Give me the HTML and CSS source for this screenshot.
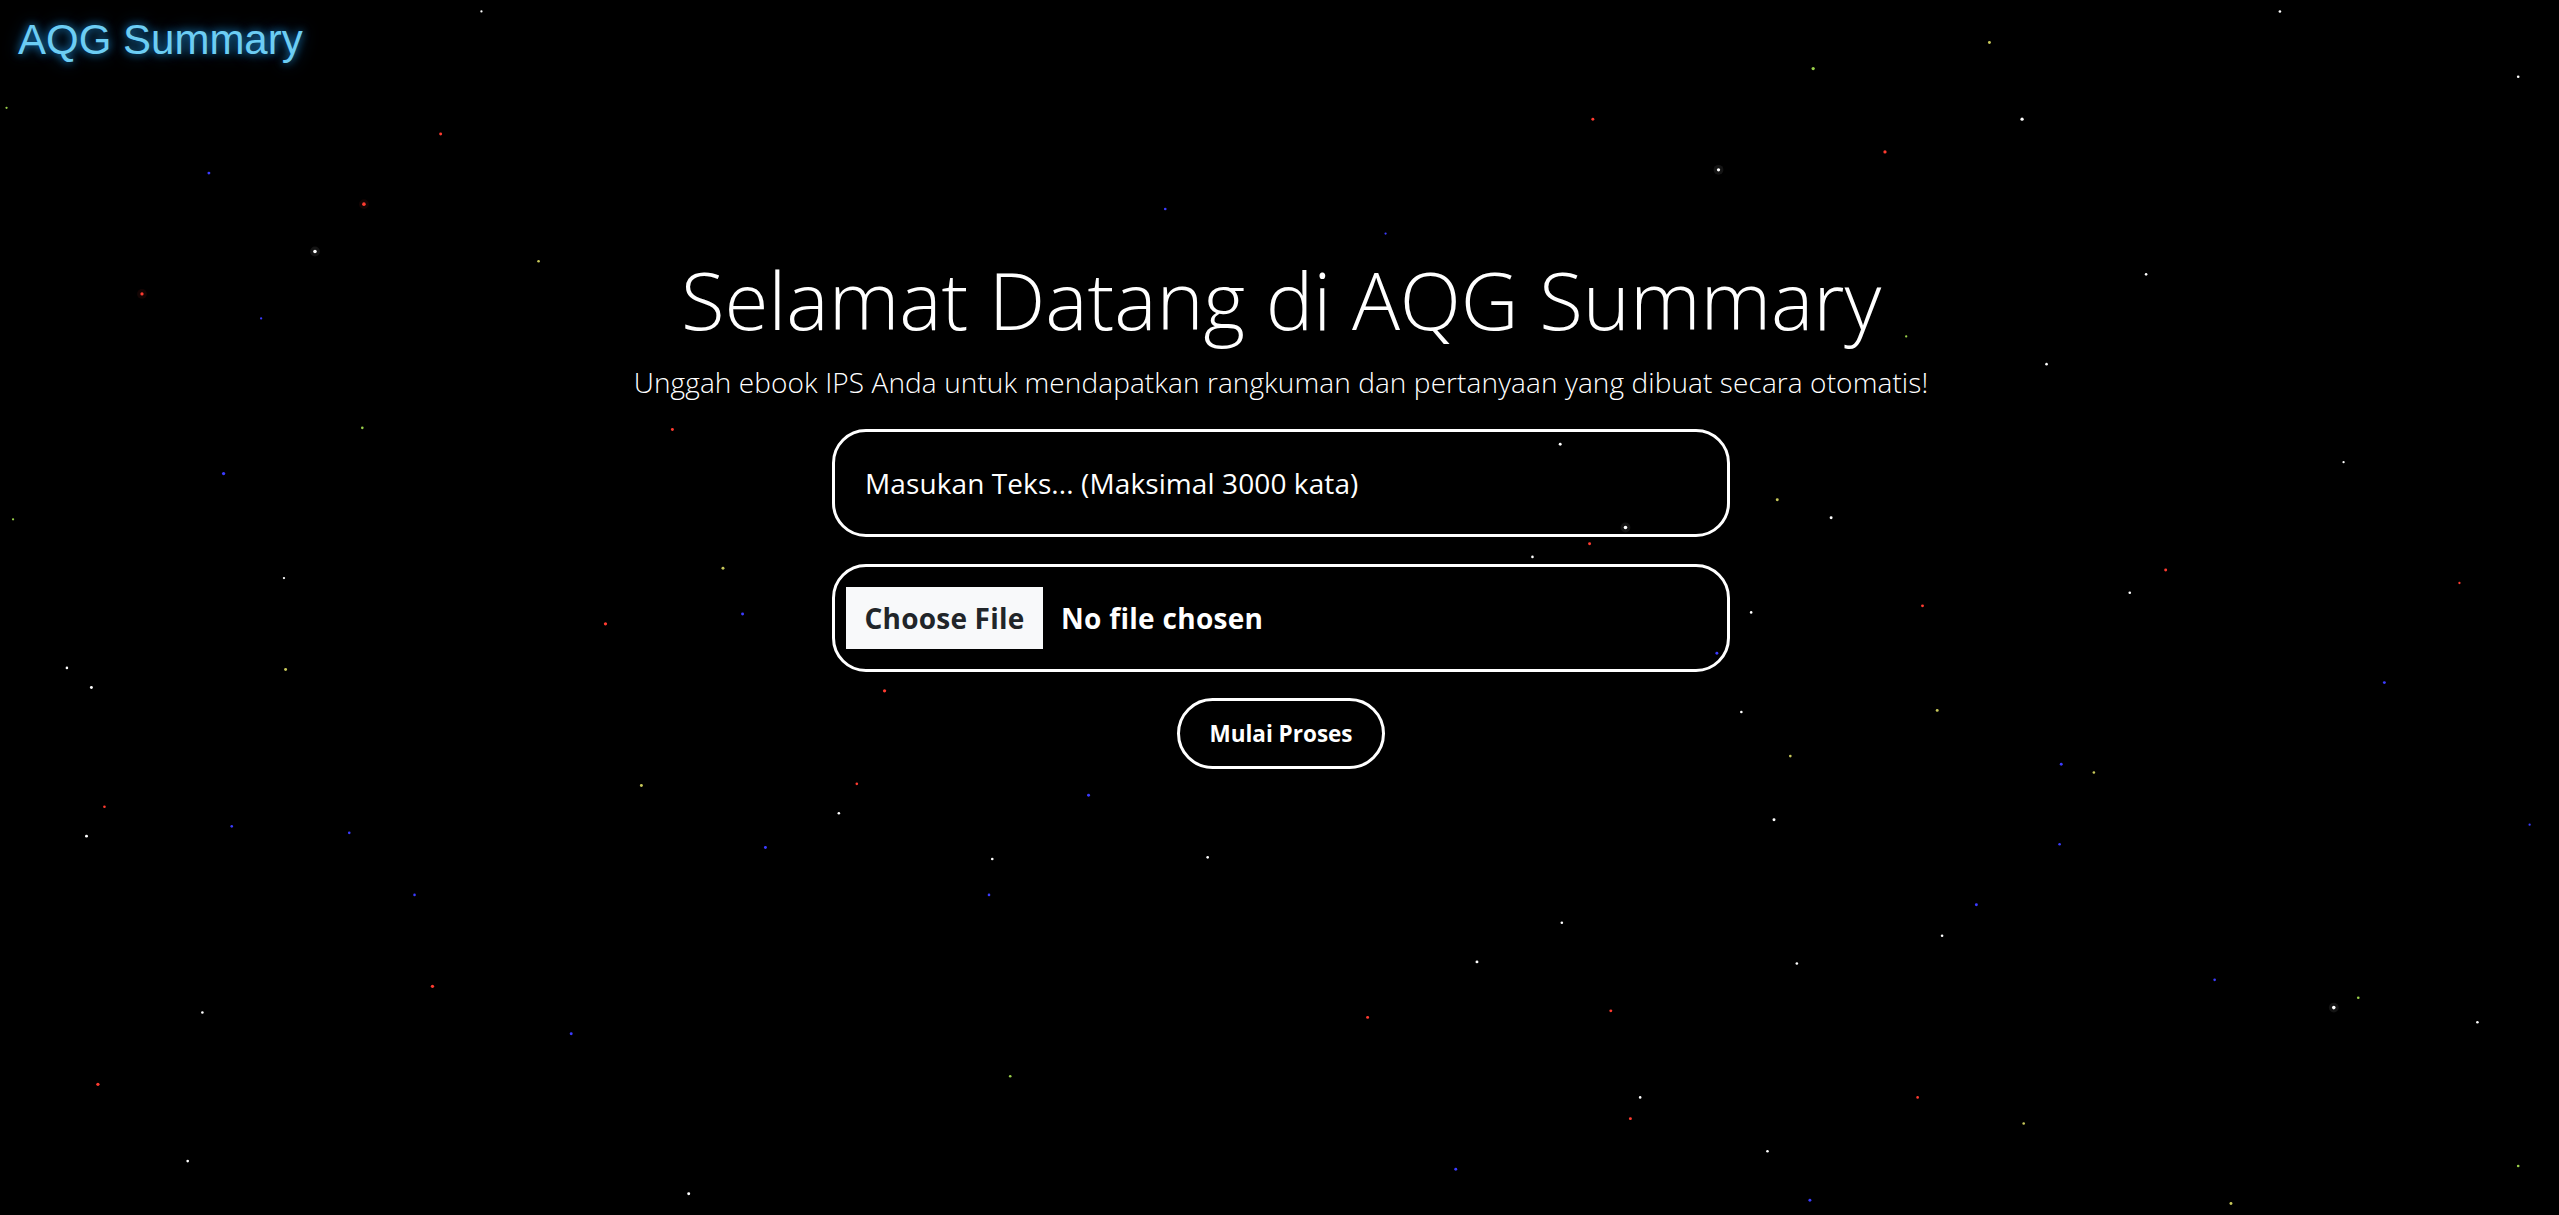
FILE: index.html
```html
<!DOCTYPE html>
<html lang="id">
<head>
<meta charset="utf-8">
<title>AQG Summary</title>
<link rel="stylesheet" href="styles.css">
</head>
<body>
<svg class="starfield" viewBox="0 0 1568 744" preserveAspectRatio="none" aria-hidden="true">
  <g class="halo">
    <circle cx="223" cy="125" r="3" fill="#ff3b30"/>
    <circle cx="193" cy="154" r="3" fill="#ffffff"/>
    <circle cx="87" cy="180" r="3" fill="#ff3b30"/>
    <circle cx="996" cy="323" r="3" fill="#ffffff"/>
    <circle cx="1053" cy="104" r="3" fill="#ffffff"/>
    <circle cx="1430" cy="617" r="3" fill="#ffffff"/>
  </g>
  <circle cx="223" cy="125" r="1.1" fill="#ff3b30"/>
  <circle cx="193" cy="154" r="1.1" fill="#ffffff"/>
  <circle cx="87" cy="180" r="1" fill="#ff3b30"/>
  <circle cx="128" cy="106" r="0.9" fill="#3b3bff"/>
  <circle cx="270" cy="82" r="0.9" fill="#ff3b30"/>
  <circle cx="330" cy="160" r="0.8" fill="#c8c85a"/>
  <circle cx="137" cy="290" r="1" fill="#3b3bff"/>
  <circle cx="371" cy="382" r="1" fill="#ff3b30"/>
  <circle cx="56" cy="421" r="0.9" fill="#ffffff"/>
  <circle cx="41" cy="409" r="0.8" fill="#ffffff"/>
  <circle cx="175" cy="410" r="0.9" fill="#c8c85a"/>
  <circle cx="443" cy="348" r="0.9" fill="#c8c85a"/>
  <circle cx="455" cy="376" r="0.9" fill="#3b3bff"/>
  <circle cx="412" cy="263" r="0.9" fill="#ff3b30"/>
  <circle cx="542" cy="423" r="1" fill="#ff3b30"/>
  <circle cx="1053" cy="104" r="1" fill="#ffffff"/>
  <circle cx="1111" cy="42" r="1" fill="#9ad04a"/>
  <circle cx="1155" cy="93" r="1" fill="#ff3b30"/>
  <circle cx="1239" cy="73" r="1" fill="#ffffff"/>
  <circle cx="1219" cy="26" r="0.9" fill="#c8c85a"/>
  <circle cx="1397" cy="7" r="0.8" fill="#ffffff"/>
  <circle cx="1543" cy="47" r="0.8" fill="#ffffff"/>
  <circle cx="976" cy="73" r="0.9" fill="#ff3b30"/>
  <circle cx="1254" cy="223" r="0.8" fill="#ffffff"/>
  <circle cx="1315" cy="168" r="0.8" fill="#ffffff"/>
  <circle cx="1089" cy="306" r="0.9" fill="#c8c85a"/>
  <circle cx="1122" cy="317" r="0.9" fill="#ffffff"/>
  <circle cx="1327" cy="349" r="0.9" fill="#ff3b30"/>
  <circle cx="1305" cy="363" r="0.8" fill="#ffffff"/>
  <circle cx="1178" cy="371" r="0.9" fill="#ff3b30"/>
  <circle cx="1073" cy="375" r="0.8" fill="#ffffff"/>
  <circle cx="996" cy="323" r="1.1" fill="#ffffff"/>
  <circle cx="956" cy="272" r="0.9" fill="#ffffff"/>
  <circle cx="974" cy="333" r="0.9" fill="#ff3b30"/>
  <circle cx="939" cy="341" r="0.8" fill="#ffffff"/>
  <circle cx="1052" cy="400" r="0.9" fill="#3b3bff"/>
  <circle cx="1187" cy="435" r="0.9" fill="#c8c85a"/>
  <circle cx="1263" cy="468" r="0.9" fill="#3b3bff"/>
  <circle cx="1283" cy="473" r="0.8" fill="#c8c85a"/>
  <circle cx="1461" cy="418" r="0.9" fill="#3b3bff"/>
  <circle cx="1097" cy="463" r="0.8" fill="#c8c85a"/>
  <circle cx="1067" cy="436" r="0.8" fill="#ffffff"/>
  <circle cx="1087" cy="502" r="0.9" fill="#ffffff"/>
  <circle cx="1211" cy="554" r="0.9" fill="#3b3bff"/>
  <circle cx="1357" cy="600" r="0.8" fill="#3b3bff"/>
  <circle cx="1430" cy="617" r="1.1" fill="#ffffff"/>
  <circle cx="1445" cy="611" r="0.8" fill="#9ad04a"/>
  <circle cx="1101" cy="590" r="0.8" fill="#ffffff"/>
  <circle cx="905" cy="589" r="0.9" fill="#ffffff"/>
  <circle cx="957" cy="565" r="0.8" fill="#ffffff"/>
  <circle cx="987" cy="619" r="0.9" fill="#ff3b30"/>
  <circle cx="1175" cy="672" r="0.8" fill="#ff3b30"/>
  <circle cx="1005" cy="672" r="0.8" fill="#ffffff"/>
  <circle cx="999" cy="685" r="0.9" fill="#ff3b30"/>
  <circle cx="1083" cy="705" r="0.8" fill="#ffffff"/>
  <circle cx="1109" cy="735" r="0.9" fill="#3b3bff"/>
  <circle cx="1367" cy="737" r="0.9" fill="#c8c85a"/>
  <circle cx="1240" cy="688" r="0.8" fill="#c8c85a"/>
  <circle cx="892" cy="716" r="0.9" fill="#3b3bff"/>
  <circle cx="838" cy="623" r="0.9" fill="#ff3b30"/>
  <circle cx="422" cy="731" r="0.9" fill="#ffffff"/>
  <circle cx="350" cy="633" r="0.9" fill="#3b3bff"/>
  <circle cx="265" cy="604" r="1" fill="#ff3b30"/>
  <circle cx="124" cy="620" r="0.8" fill="#ffffff"/>
  <circle cx="60" cy="664" r="1" fill="#ff3b30"/>
  <circle cx="115" cy="711" r="0.8" fill="#ffffff"/>
  <circle cx="53" cy="512" r="0.9" fill="#ffffff"/>
  <circle cx="64" cy="494" r="0.8" fill="#ff3b30"/>
  <circle cx="393" cy="481" r="0.9" fill="#c8c85a"/>
  <circle cx="469" cy="519" r="0.9" fill="#3b3bff"/>
  <circle cx="606" cy="548" r="0.8" fill="#3b3bff"/>
  <circle cx="619" cy="659" r="0.8" fill="#9ad04a"/>
  <circle cx="740" cy="525" r="0.8" fill="#ffffff"/>
  <circle cx="667" cy="487" r="0.9" fill="#3b3bff"/>
  <circle cx="608" cy="526" r="0.8" fill="#ffffff"/>
  <circle cx="514" cy="498" r="0.8" fill="#ffffff"/>
  <circle cx="525" cy="480" r="0.8" fill="#ff3b30"/>
  <circle cx="254" cy="548" r="0.8" fill="#3b3bff"/>
  <circle cx="142" cy="506" r="0.8" fill="#3b3bff"/>
  <circle cx="214" cy="510" r="0.8" fill="#3b3bff"/>
  <circle cx="1543" cy="714" r="0.8" fill="#9ad04a"/>
  <circle cx="1518" cy="626" r="0.8" fill="#ffffff"/>
  <circle cx="1190" cy="573" r="0.8" fill="#ffffff"/>
  <circle cx="1262" cy="517" r="0.8" fill="#3b3bff"/>
  <circle cx="222" cy="262" r="0.8" fill="#9ad04a"/>
  <circle cx="174" cy="354" r="0.7" fill="#ffffff"/>
  <circle cx="8" cy="318" r="0.7" fill="#9ad04a"/>
  <circle cx="714" cy="128" r="0.8" fill="#3b3bff"/>
  <circle cx="849" cy="143" r="0.7" fill="#3b3bff"/>
  <circle cx="1168" cy="206" r="0.7" fill="#9ad04a"/>
  <circle cx="1436" cy="283" r="0.7" fill="#ffffff"/>
  <circle cx="1507" cy="357" r="0.7" fill="#ff3b30"/>
  <circle cx="1550" cy="505" r="0.7" fill="#3b3bff"/>
  <circle cx="295" cy="7" r="0.7" fill="#ffffff"/>
  <circle cx="160" cy="195" r="0.7" fill="#3b3bff"/>
  <circle cx="4" cy="66" r="0.7" fill="#9ad04a"/>
</svg>

<header class="site-header">
  <span class="logo">AQG Summary</span>
</header>

<main class="hero">
  <h1 class="hero-title">Selamat Datang di AQG Summary</h1>
  <p class="hero-subtitle">Unggah ebook IPS Anda untuk mendapatkan rangkuman dan pertanyaan yang dibuat secara otomatis!</p>

  <form class="upload-form">
    <div class="field text-field"><span class="field-placeholder">Masukan Teks... (Maksimal 3000 kata)</span></div>
    <label class="field file-field">
      <input type="file" class="file-native">
      <span class="file-button">Choose File</span>
      <span class="file-name">No file chosen</span>
    </label>
    <button type="button" class="submit-button">Mulai Proses</button>
  </form>
</main>
</body>
</html>
```

FILE: styles.css
```css
* {
  box-sizing: border-box;
}

html, body {
  margin: 0;
  padding: 0;
  background: #000;
}

body {
  min-height: 100vh;
  position: relative;
  overflow: hidden;
  color: #fff;
  font-family: "Open Sans", "Noto Sans", sans-serif;
}

.starfield {
  position: absolute;
  inset: 0;
  width: 100%;
  height: 100%;
  z-index: 0;
}

.starfield .halo circle {
  opacity: 0.08;
}

.site-header,
.hero {
  position: relative;
  z-index: 1;
}

.site-header {
  padding: 16px 18px 0;
  height: 64px;
}

.logo {
  font-family: "Liberation Sans", Arial, sans-serif;
  font-size: 42px;
  line-height: 48px;
  color: #6ccdf4;
  text-shadow: 0 0 8px rgba(40, 170, 255, 0.75), 0 0 18px rgba(20, 130, 220, 0.45);
}

.hero {
  display: flex;
  flex-direction: column;
  align-items: center;
  padding-top: 186px;
  padding-left: 3px;
}

.hero-title {
  margin: 0;
  font-size: 80px;
  font-weight: 300;
  line-height: 98px;
  letter-spacing: -0.1px;
  color: #fff;
}

.hero-subtitle {
  margin: 17px 0 0;
  font-size: 28px;
  font-weight: 300;
  line-height: 34px;
  letter-spacing: 0.1px;
  color: #fff;
}

.upload-form {
  margin-top: 30px;
  display: flex;
  flex-direction: column;
  align-items: center;
  gap: 27px;
}

.field {
  width: 898px;
  height: 108px;
  border: 3px solid #fff;
  border-radius: 34px;
  display: flex;
  align-items: center;
}

.text-field {
  padding-left: 30px;
}

.field-placeholder {
  font-size: 28px;
  font-weight: 400;
  letter-spacing: 0.1px;
  color: #fff;
}

.file-field {
  padding-left: 11px;
  cursor: pointer;
}

.file-native {
  display: none;
}

.file-button {
  width: 197px;
  height: 62px;
  display: flex;
  align-items: center;
  justify-content: center;
  background: #f8f9fa;
  color: #212529;
  font-size: 28px;
  font-weight: 700;
  letter-spacing: 0.2px;
}

.file-name {
  margin-left: 18px;
  font-size: 28px;
  font-weight: 700;
  letter-spacing: 0.3px;
  color: #fff;
}

.submit-button {
  margin-top: -1px;
  width: 208px;
  height: 71px;
  border: 3px solid #fff;
  border-radius: 36px;
  background: transparent;
  color: #fff;
  font-family: "Open Sans", "Noto Sans", sans-serif;
  font-size: 22.5px;
  font-weight: 700;
  cursor: pointer;
}
```
